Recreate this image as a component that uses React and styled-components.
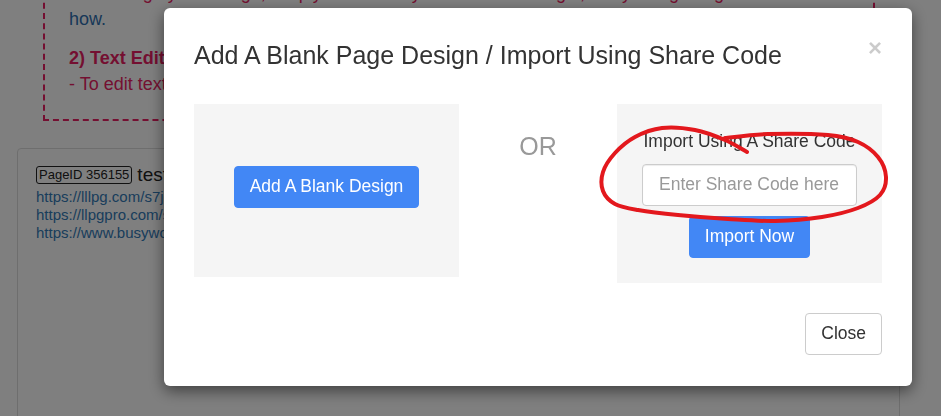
import React from 'react';
import styled, { createGlobalStyle } from 'styled-components';

const GlobalStyle = createGlobalStyle`
  html, body {
    margin: 0;
    padding: 0;
    background: #fff;
    overflow: hidden;
  }
  body {
    font-family: "Liberation Sans", Arial, sans-serif;
    color: #333;
  }
  * {
    box-sizing: border-box;
  }
`

// page behind the modal
const Page = styled.div`
  padding: 0 41px 0 17px;
  height: 416px;
  overflow: hidden;
`

const NoteBox = styled.div`
  margin: -38px 25px 0 26px;
  padding: 16px 24px 22px;
  border: 2px dashed #e91e63;
`

const NoteText = styled.p`
  margin: 0 0 ${props => props.$gap || 0}px;
  font-size: 18px;
  line-height: 26px;
  color: #e91e63;
  font-weight: ${props => props.$bold ? 700 : 400};
  white-space: nowrap;
`

const NoteLink = styled.a`
  color: #2f6fb0;
  text-decoration: none;
`

const PageCard = styled.div`
  margin-top: 27px;
  min-height: 320px;
  padding: 15px 18px;
  border: 1px solid #ddd;
  border-radius: 4px;
`

const CardTitleRow = styled.div`
  display: flex;
  align-items: center;
  height: 22px;
  margin-bottom: 2px;
`

const PageIdBadge = styled.span`
  font-size: 13px;
  line-height: 16px;
  padding: 0 2px;
  border: 1px solid #222;
  border-radius: 3px;
  color: #222;
`

const CardTitle = styled.span`
  margin-left: 5px;
  font-size: 19px;
  color: #222;
`

const CardLink = styled.a`
  display: block;
  font-size: 15px;
  line-height: 18px;
  color: #337ab7;
  text-decoration: none;
  white-space: nowrap;
`

// modal
const Backdrop = styled.div`
  position: fixed;
  inset: 0;
  background: rgba(0, 0, 0, 0.5);
  padding: 8px 29px 0 164px;
  display: flex;
  align-items: flex-start;
`

const Modal = styled.div`
  width: 748px;
  background: #fff;
  border-radius: 6px;
  box-shadow: 0 5px 15px rgba(0, 0, 0, 0.5);
`

const ModalHeader = styled.div`
  display: flex;
  justify-content: space-between;
  align-items: flex-start;
  padding: 34px 30px 0;
`

const ModalTitle = styled.h4`
  margin: 0;
  font-size: 25px;
  line-height: 27.5px;
  font-weight: 400;
  color: #333;
`

const CloseX = styled.button`
  margin-top: -6px;
  padding: 0;
  border: 0;
  background: none;
  font-family: inherit;
  font-size: 24px;
  font-weight: 700;
  line-height: 24px;
  color: #000;
  opacity: 0.2;
  cursor: pointer;
`

const ModalBody = styled.div`
  display: grid;
  grid-template-columns: 265px 1fr 265px;
  align-items: start;
  padding: 34px 30px 0;
`

const Panel = styled.div`
  display: flex;
  flex-direction: column;
  align-items: center;
  background: #f5f5f5;
`

const BlankPanel = styled(Panel)`
  height: 173px;
  justify-content: center;
  padding-bottom: 7px;
`

const ImportPanel = styled(Panel)`
  padding: 25px 0;
`

const OrText = styled.div`
  padding-top: 27px;
  text-align: center;
  font-size: 25px;
  line-height: 30px;
  color: #999;
`

const ShareLabel = styled.div`
  margin-bottom: 10px;
  font-size: 17.5px;
  line-height: 25px;
  color: #333;
`

const ShareInput = styled.input`
  width: 215px;
  height: 42px;
  padding: 0 16px;
  border: 1px solid #ccc;
  border-radius: 4px;
  box-shadow: inset 0 1px 1px rgba(0, 0, 0, 0.075);
  font-family: inherit;
  font-size: 17.5px;
  color: #555;
  outline: none;
  &::placeholder {
    color: #999;
  }
`

const Button = styled.button`
  height: 42px;
  margin-top: ${props => props.$top || 0}px;
  padding: 0 15px;
  border: 1px solid ${props => props.$primary ? '#4287f5' : '#ccc'};
  border-radius: 4px;
  background: ${props => props.$primary ? '#4287f5' : '#fff'};
  color: ${props => props.$primary ? '#fff' : '#333'};
  font-family: inherit;
  font-size: 17.5px;
  cursor: pointer;
`

const ModalFooter = styled.div`
  display: flex;
  justify-content: flex-end;
  padding: 30px 30px 31px;
`

// hand drawn red circle sitting over the screenshot
const Scribble = styled.svg`
  position: fixed;
  inset: 0;
  width: 941px;
  height: 416px;
  pointer-events: none;
`

const scribblePoints = [
  [725, 138], [768, 134], [828, 135], [858, 142], [878, 157], [886, 177],
  [880, 195], [858, 208], [822, 217], [775, 221], [728, 219], [678, 215],
  [638, 210], [615, 204], [603, 191], [603, 172], [615, 153], [635, 137],
  [662, 128], [695, 130], [725, 140], [747, 152],
];

const smoothPath = pts => {
  let d = `M${pts[0][0]} ${pts[0][1]}`;
  for (let i = 0; i < pts.length - 1; i++) {
    const p0 = pts[i - 1] || pts[i];
    const p1 = pts[i];
    const p2 = pts[i + 1];
    const p3 = pts[i + 2] || p2;
    const c1 = [p1[0] + (p2[0] - p0[0]) / 6, p1[1] + (p2[1] - p0[1]) / 6];
    const c2 = [p2[0] - (p3[0] - p1[0]) / 6, p2[1] - (p3[1] - p1[1]) / 6];
    d += ` C${c1[0].toFixed(1)} ${c1[1].toFixed(1)} ${c2[0].toFixed(1)} ${c2[1].toFixed(1)} ${p2[0]} ${p2[1]}`;
  }
  return d;
};

const App = () => (
  <>
    <GlobalStyle />
    <Page>
      <NoteBox>
        <NoteText>
          - To change your design, simply click on any element and drag it, or try using the guide to see
        </NoteText>
        <NoteText $gap={13}>
          <NoteLink>how.</NoteLink>
        </NoteText>
        <NoteText $bold>2) Text Editor</NoteText>
        <NoteText>- To edit text, click on it</NoteText>
      </NoteBox>
      <PageCard>
        <CardTitleRow>
          <PageIdBadge>PageID 356155</PageIdBadge>
          <CardTitle>test</CardTitle>
        </CardTitleRow>
        <CardLink>https://lllpg.com/s7jg</CardLink>
        <CardLink>https://llpgpro.com/s7jg</CardLink>
        <CardLink>https://www.busywork.com</CardLink>
      </PageCard>
    </Page>

    <Backdrop>
      <Modal>
        <ModalHeader>
          <ModalTitle>Add A Blank Page Design / Import Using Share Code</ModalTitle>
          <CloseX>×</CloseX>
        </ModalHeader>
        <ModalBody>
          <BlankPanel>
            <Button $primary>Add A Blank Design</Button>
          </BlankPanel>
          <OrText>OR</OrText>
          <ImportPanel>
            <ShareLabel>Import Using A Share Code</ShareLabel>
            <ShareInput placeholder="Enter Share Code here" />
            <Button $primary $top={10}>Import Now</Button>
          </ImportPanel>
        </ModalBody>
        <ModalFooter>
          <Button>Close</Button>
        </ModalFooter>
      </Modal>
    </Backdrop>

    <Scribble viewBox="0 0 941 416">
      <path
        d={smoothPath(scribblePoints)}
        fill="none"
        stroke="#e3181d"
        strokeWidth="4"
        strokeLinecap="round"
        strokeLinejoin="round"
      />
    </Scribble>
  </>
);

export default App;
